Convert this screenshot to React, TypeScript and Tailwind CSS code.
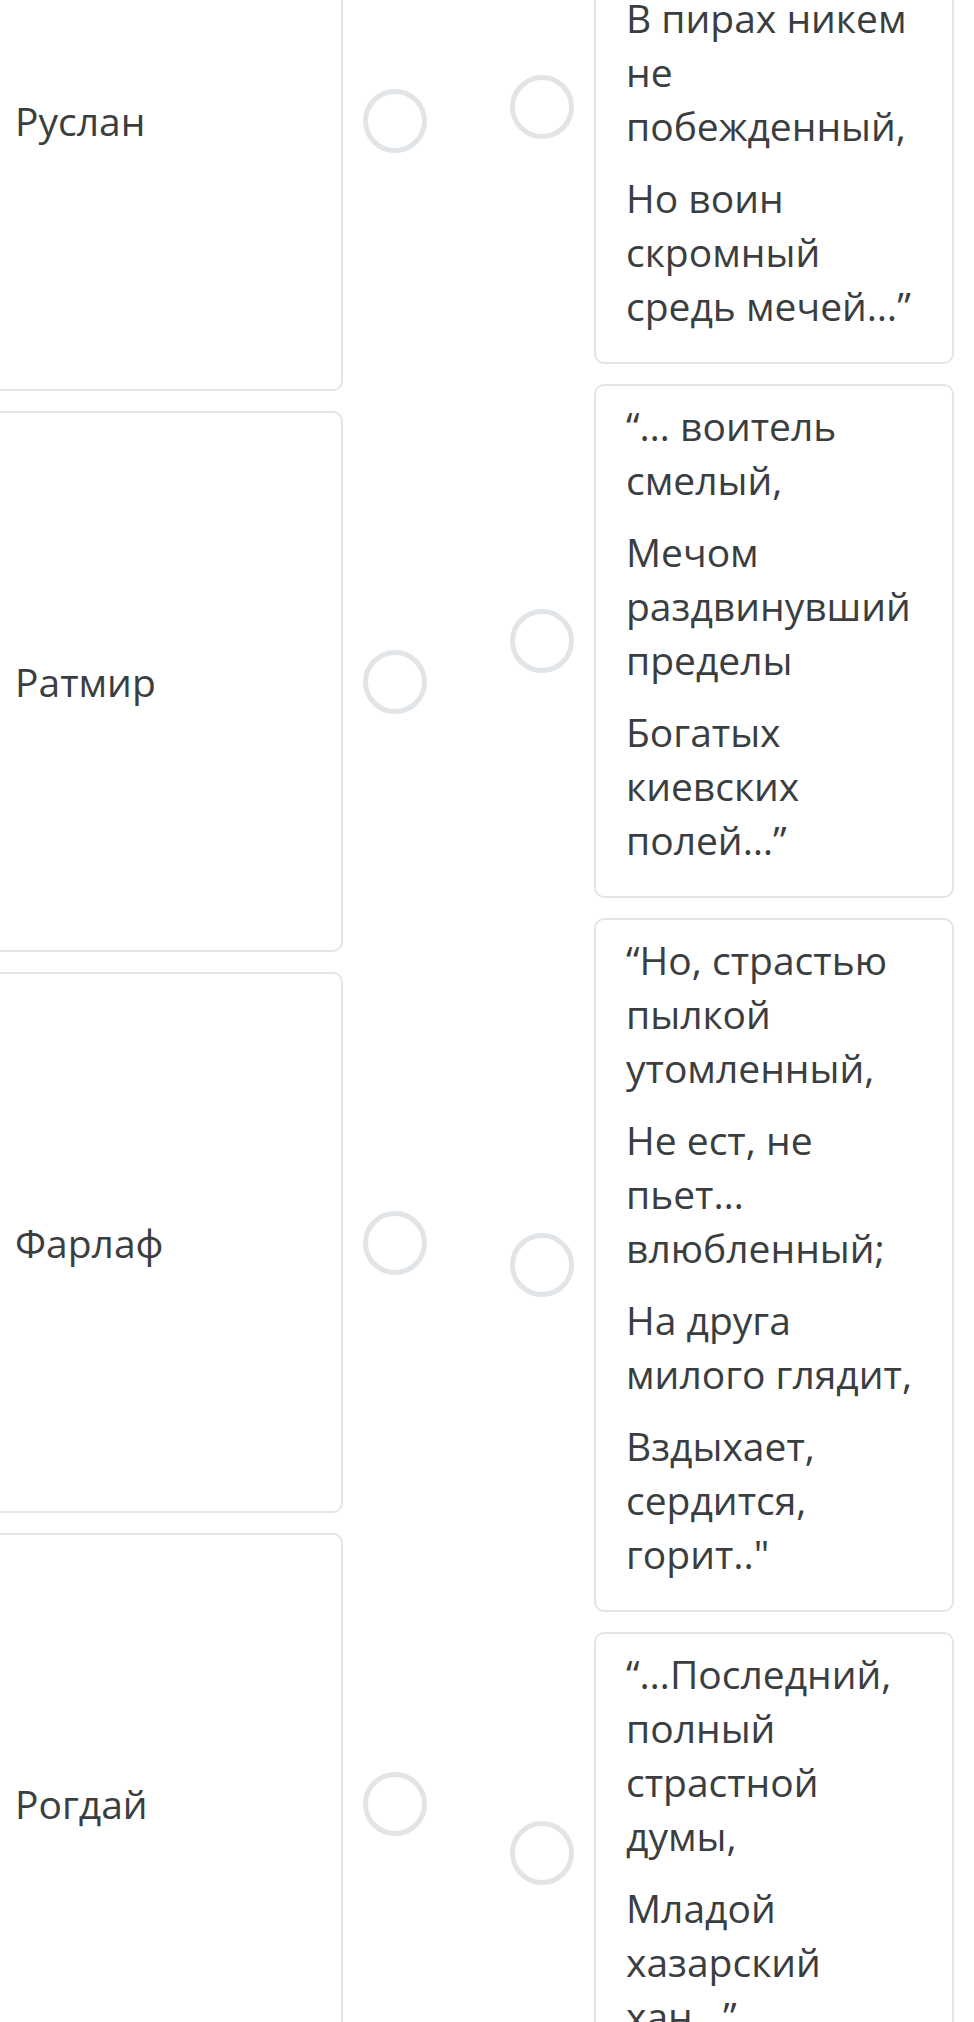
import React from 'react';

interface MatchRow {
  name: string;
  quote: string[];
}

const rows: MatchRow[] = [
  {
    name: 'Руслан',
    quote: ['“Другой Фарлаф,', 'В пирах никем не побежденный,', 'Но воин скромный средь мечей…”'],
  },
  {
    name: 'Ратмир',
    quote: ['“… воитель смелый,', 'Мечом раздвинувший пределы', 'Богатых киевских полей…”'],
  },
  {
    name: 'Фарлаф',
    quote: [
      '“Но, страстью пылкой утомленный,',
      'Не ест, не пьет… влюбленный;',
      'На друга милого глядит,',
      'Вздыхает, сердится, горит.."',
    ],
  },
  {
    name: 'Рогдай',
    quote: ['“…Последний, полный страстной думы,', 'Младой хазарский хан…”'],
  },
];

const Radio: React.FC = () => (
  <div className="w-[64px] h-[64px] flex-shrink-0 rounded-full border-[5px] border-[#e2e5e8] bg-white" />
);

export default function App() {
  return (
    <div
      className="bg-white h-[2022px] overflow-hidden text-[#3b3e41]"
      style={{ fontFamily: '"Open Sans", "Noto Sans", sans-serif' }}
    >
      <div className="-mt-[150px] flex items-stretch">
        {/* left side: names */}
        <div className="-ml-[17px] flex flex-col gap-[20px]">
          {rows.map((row) => (
            <div key={row.name} className="flex-1 flex items-center">
              <div className="w-[360px] self-stretch flex items-center rounded-[10px] border-2 border-[#e3e6e9] px-[30px] text-[39px] leading-[54px]">
                {row.name}
              </div>
              <div className="ml-[20px]">
                <Radio />
              </div>
            </div>
          ))}
        </div>

        {/* right side: quotes */}
        <div className="ml-[83px] flex flex-col gap-[20px]">
          {rows.map((row) => (
            <div key={row.name} className="flex items-center">
              <Radio />
              <div className="ml-[20px] w-[360px] rounded-[10px] border-2 border-[#e3e6e9] px-[30px] pt-[13px] pb-[11px] text-[39px] leading-[54px]">
                {row.quote.map((line, i) => (
                  <p key={i} className="mb-[18px]">
                    {line}
                  </p>
                ))}
              </div>
            </div>
          ))}
        </div>
      </div>
    </div>
  );
}
